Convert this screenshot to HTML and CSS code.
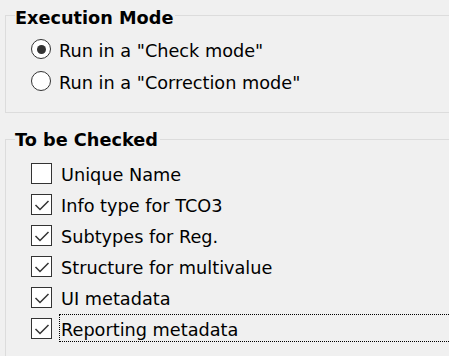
FILE: index.html
```html
<!DOCTYPE html>
<html lang="en">

<head>
    <meta charset="UTF-8">
    <title>Check Options</title>
    <link rel="stylesheet" href="styles.css">
</head>

<body>
    <fieldset class="group">
        <legend class="group-title">Execution Mode</legend>
        <div class="option radio-row">
            <span class="radio checked"></span>
            <span class="option-text">Run in a "Check mode"</span>
        </div>
        <div class="option radio-row">
            <span class="radio"></span>
            <span class="option-text">Run in a "Correction mode"</span>
        </div>
    </fieldset>

    <fieldset class="group group-checks">
        <legend class="group-title">To be Checked</legend>
        <div class="option">
            <span class="box"></span>
            <span class="option-text">Unique Name</span>
        </div>
        <div class="option">
            <span class="box"><svg viewBox="0 0 19 19"><polyline points="3.5,10 8,14.5 16.5,6" /></svg></span>
            <span class="option-text">Info type for TCO3</span>
        </div>
        <div class="option">
            <span class="box"><svg viewBox="0 0 19 19"><polyline points="3.5,10 8,14.5 16.5,6" /></svg></span>
            <span class="option-text">Subtypes for Reg.</span>
        </div>
        <div class="option">
            <span class="box"><svg viewBox="0 0 19 19"><polyline points="3.5,10 8,14.5 16.5,6" /></svg></span>
            <span class="option-text">Structure for multivalue</span>
        </div>
        <div class="option">
            <span class="box"><svg viewBox="0 0 19 19"><polyline points="3.5,10 8,14.5 16.5,6" /></svg></span>
            <span class="option-text">UI metadata</span>
        </div>
        <div class="option">
            <span class="box"><svg viewBox="0 0 19 19"><polyline points="3.5,10 8,14.5 16.5,6" /></svg></span>
            <span class="option-text focused">Reporting metadata</span>
        </div>
    </fieldset>
</body>

</html>
```
FILE: styles.css
```css
body {
    font-family: "DejaVu Sans", sans-serif;
    font-size: 17.7px;
    color: #000;
    background-color: #f0f0f0;
    margin: 0;
    overflow: hidden;
}

/* group boxes run on past the right edge of the window */
.group {
    margin: 2px 0 0 5px;
    padding: 7px 0 13px 25px;
    border: 1px solid #dcdcdc;
    border-right: none;
    min-width: 0;
}

.group-checks {
    margin-top: 15px;
    padding-top: 9px;
}

.group-title {
    font-weight: bold;
    line-height: 20px;
    padding: 6px 2px 0 0;
    margin-left: -16px;
}

.group-checks .group-title {
    padding-top: 2px;
}

.option {
    display: flex;
    align-items: flex-start;
    height: 31px;
}

.radio-row {
    height: 32px;
}

.radio {
    width: 20px;
    height: 20px;
    margin-top: 4px;
    box-sizing: border-box;
    border: 1px solid #333;
    border-radius: 50%;
    background: #fff;
    display: flex;
    align-items: center;
    justify-content: center;
    flex: none;
}

.radio.checked:after {
    content: '';
    width: 9px;
    height: 9px;
    border-radius: 50%;
    background: #333;
}

.box {
    width: 21px;
    height: 21px;
    margin-top: 4px;
    box-sizing: border-box;
    border: 1px solid #333;
    background: #fff;
    flex: none;
}

.box svg {
    display: block;
    width: 19px;
    height: 19px;
}

.box polyline {
    fill: none;
    stroke: #333;
    stroke-width: 1.5;
}

.option-text {
    flex: 1;
    min-width: 0;
    line-height: 22px;
    padding: 4px 0 0 1px;
    margin-left: 7px;
    border: 1px solid transparent;
    border-right: none;
    white-space: nowrap;
}

.radio-row .option-text {
    padding-left: 0;
}

.option-text.focused {
    border: 1px dotted #000;
    border-right: none;
}
```
